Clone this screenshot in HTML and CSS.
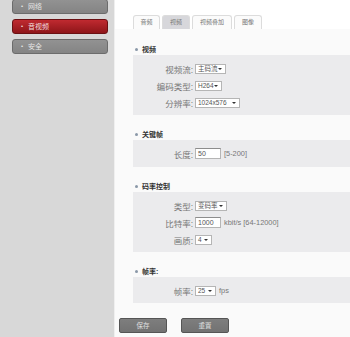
FILE: index.html
```html
<!DOCTYPE html>
<html lang="zh">
<head>
<meta charset="utf-8">
<link rel="stylesheet" href="styles.css">
</head>
<body>
<div class="app">
  <aside class="sidebar">
    <div class="nav-item first"><span class="dot">•</span>网络</div>
    <div class="nav-item active"><span class="dot">•</span>音视频</div>
    <div class="nav-item"><span class="dot">•</span>安全</div>
  </aside>
  <main class="content">
    <div class="topbar">
      <div class="tabs">
        <div class="tab">音频</div>
        <div class="tab active">视频</div>
        <div class="tab">视频叠加</div>
        <div class="tab">图像</div>
      </div>
    </div>
    <div class="body">
      <section class="section first">
        <div class="sec-title"><span class="bullet"></span>视频</div>
        <div class="panel">
          <div class="row"><span class="label">视频流:</span><span class="select w30">主码流<i class="arrow"></i></span></div>
          <div class="row"><span class="label">编码类型:</span><span class="select w27">H264<i class="arrow"></i></span></div>
          <div class="row"><span class="label">分辨率:</span><span class="select w45">1024x576<i class="arrow"></i></span></div>
        </div>
      </section>
      <section class="section">
        <div class="sec-title"><span class="bullet"></span>关键帧</div>
        <div class="panel">
          <div class="row"><span class="label">长度:</span><span class="input">50</span><span class="hint">[5-200]</span></div>
        </div>
      </section>
      <section class="section">
        <div class="sec-title"><span class="bullet"></span>码率控制</div>
        <div class="panel">
          <div class="row"><span class="label">类型:</span><span class="select w32">变码率<i class="arrow"></i></span></div>
          <div class="row"><span class="label">比特率:</span><span class="input">1000</span><span class="hint">kbit/s [64-12000]</span></div>
          <div class="row"><span class="label">画质:</span><span class="select w17">4<i class="arrow"></i></span></div>
        </div>
      </section>
      <section class="section">
        <div class="sec-title"><span class="bullet"></span>帧率:</div>
        <div class="panel">
          <div class="row"><span class="label">帧率:</span><span class="select w21">25<i class="arrow"></i></span><span class="hint">fps</span></div>
        </div>
      </section>
      <div class="actions">
        <button class="btn">保存</button>
        <button class="btn">重置</button>
      </div>
    </div>
  </main>
</div>
</body>
</html>
```
FILE: styles.css
```css
* { box-sizing: border-box; }
html, body { margin: 0; padding: 0; }
body {
  width: 350px;
  height: 337px;
  overflow: hidden;
  font-family: "Liberation Sans", "Noto Sans CJK SC", sans-serif;
  font-size: 8px;
  color: #666;
  background: #fafafa;
}
.app { display: flex; height: 337px; }
.sidebar {
  width: 115px;
  flex: none;
  background: #d8d8d8;
  border-right: 1px solid #efefef;
  display: flex;
  flex-direction: column;
  gap: 5px;
  padding-left: 12px;
}
.nav-item {
  width: 96px;
  height: 15px;
  border: 1px solid #6c6c6c;
  border-radius: 3px;
  background: linear-gradient(#929292, #848484);
  color: #e6e6e6;
  font-size: 7px;
  line-height: 13px;
  padding-left: 8px;
  display: flex;
  align-items: center;
  white-space: nowrap;
}
.nav-item.first { margin-top: -1px; }
.nav-item.active {
  background: linear-gradient(#c02a30, #8e1519);
  border-color: #6a1013;
  color: #f2dede;
}
.dot { margin-right: 5px; font-size: 6px; }
.content { flex: 1; display: flex; flex-direction: column; }
.topbar {
  background: #ffffff;
  height: 29px;
  padding-left: 18px;
  display: flex;
  align-items: flex-end;
}
.tabs { display: flex; gap: 2px; }
.tab {
  height: 14px;
  padding: 0;
  border: 1px solid #dcdcdc;
  border-bottom: none;
  border-radius: 3px 3px 0 0;
  background: #fbfbfb;
  color: #777;
  font-size: 6px;
  line-height: 13px;
  text-align: center;
  white-space: nowrap;
}
.tab:nth-child(1) { width: 27px; }
.tab:nth-child(2) { width: 28px; }
.tab:nth-child(3) { width: 40px; }
.tab:nth-child(4) { width: 28px; }
.tab.active { background: #d7d7db; }
.body {
  background: #fafafa;
  padding-left: 18px;
  flex: 1;
}
.section { margin-top: 14px; }
.section.first { margin-top: 15px; }
.sec-title {
  height: 11px;
  line-height: 9px;
  display: flex;
  align-items: center;
  color: #333;
  font-size: 7px;
  font-weight: bold;
  padding-left: 2px;
  padding-bottom: 1px;
  white-space: nowrap;
}
.bullet {
  width: 3px;
  height: 3px;
  border-radius: 50%;
  background: #8a98a8;
  margin-right: 4px;
}
.panel {
  background: #ebebed;
  padding: 5px 0 4px;
}
.section:nth-of-type(2) .panel { padding: 5px 0 5px; }
.row {
  height: 17px;
  display: flex;
  align-items: center;
  white-space: nowrap;
}
.label {
  width: 61px;
  text-align: right;
  padding-right: 1px;
  margin-right: 1px;
  color: #777;
  font-size: 8.5px;
}
.select {
  position: relative;
  height: 10px;
  border: 1px solid #b5b5b5;
  background: #fff;
  color: #555;
  font-size: 6.5px;
  line-height: 8px;
  padding-left: 2px;
  white-space: nowrap;
}
.arrow {
  position: absolute;
  right: 3px;
  top: 3px;
  width: 0;
  height: 0;
  border-left: 2px solid transparent;
  border-right: 2px solid transparent;
  border-top: 2.5px solid #333;
}
.w30 { width: 31px; }
.w27 { width: 27px; }
.w45 { width: 45px; }
.w32 { width: 32px; }
.w17 { width: 17px; }
.w21 { width: 21px; }
.input {
  width: 26px;
  height: 11px;
  border: 1px solid #b5b5b5;
  border-top-color: #8d8d8d;
  background: #fff;
  color: #555;
  font-size: 7px;
  line-height: 9px;
  padding-left: 2px;
}
.hint { margin-left: 3px; color: #777; font-size: 7.4px; }
.actions {
  margin-top: 15px;
  margin-left: -14px;
  display: flex;
  gap: 14px;
}
.btn {
  width: 48px;
  height: 15px;
  border: 1px solid #555;
  border-radius: 2px;
  background: linear-gradient(#7e7e7e, #727272);
  color: #e0e0e0;
  font-family: inherit;
  font-size: 6.5px;
  padding: 0;
  line-height: 13px;
}
```
